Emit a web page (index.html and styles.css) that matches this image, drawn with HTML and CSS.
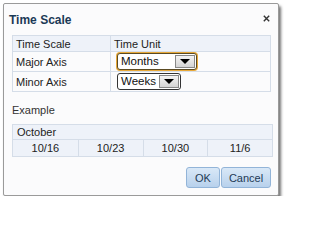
FILE: index.html
```html
<!DOCTYPE html>
<html>
<head>
<meta charset="utf-8">
<link rel="stylesheet" href="styles.css">
</head>
<body>
<div class="dialog">
  <div class="titlebar">
    <span class="title">Time Scale</span>
    <svg class="close" width="7" height="7" viewBox="0 0 7 7"><path d="M0.8 0.8 L6.2 6.2 M6.2 0.8 L0.8 6.2" stroke="#333" stroke-width="1.4" fill="none"/></svg>
  </div>
  <div class="content">
    <table class="grid">
      <tr class="head"><td class="c1">Time Scale</td><td>Time Unit</td></tr>
      <tr><td class="c1">Major Axis</td><td><div class="sel focus sel-m"><span class="val">Months</span><span class="btn"><span class="tri"></span></span></div></td></tr>
      <tr><td class="c1">Minor Axis</td><td><div class="sel sel-w"><span class="val">Weeks</span><span class="btn"><span class="tri"></span></span></div></td></tr>
    </table>
    <div class="label">Example</div>
    <div class="example">
      <div class="month">October</div>
      <div class="weeks">
        <div class="wk">10/16</div>
        <div class="wk">10/23</div>
        <div class="wk">10/30</div>
        <div class="wk">11/6</div>
      </div>
    </div>
    <div class="actions">
      <button class="b b-ok">OK</button>
      <button class="b b-cancel">Cancel</button>
    </div>
  </div>
</div>
</body>
</html>
```
FILE: styles.css
```css
html, body { margin: 0; padding: 0; background: #ffffff; }
body { padding: 3px 0 0 3px; font-family: "Liberation Sans", Arial, sans-serif; font-size: 11px; color: #333; }
.dialog {
  width: 274px; height: 191px;
  border: 1px solid #9a9a9a;
  border-radius: 2px;
  background: #fbfbfc;
  box-shadow: 2px 3px 3px rgba(0,0,0,0.55);
  display: flex; flex-direction: column;
}
.titlebar { height: 30px; display: flex; align-items: center; justify-content: space-between; padding: 0 8px 0 5px; }
.title { font-weight: bold; font-size: 12px; color: #1b3956; margin-top: 2px; }
.close { margin-top: -1px; }
.content { padding: 1px 7px 0 8px; display: flex; flex-direction: column; }
.grid { border-collapse: collapse; width: 259px; }
.grid td { border: 1px solid #d5dde8; padding: 0 0 0 3px; height: 19px; color: #222; }
.grid .head td { background: #eef2f9; height: 15px; }
.grid td.c1 { width: 94px; }
.sel { display: flex; align-items: stretch; border: 1px solid #333; border-radius: 3px; background: #fff; height: 15px; box-sizing: border-box; margin-left: 3px; }
.sel-m { width: 80px; height: 17px; border-color: #5a4a22; box-shadow: 0 0 0 1px #e8a93a; }
.sel-w { width: 64px; height: 17px; }
.sel .val { flex: 1; padding-left: 3px; line-height: 15px; font-size: 11.5px; color: #111; }
.sel .btn { width: 18px; margin: 1px; border: 1px solid #888; background: linear-gradient(#f4f4f4, #d4d4d4); display: flex; align-items: center; justify-content: center; }
.tri { width: 0; height: 0; border-left: 5px solid transparent; border-right: 5px solid transparent; border-top: 5px solid #000; }
.label { margin-top: 12px; height: 20px; color: #333; }
.example { width: 259px; border: 1px solid #d5dde8; background: #eef2f9; }
.month { height: 14px; line-height: 15px; padding-left: 4px; border-bottom: 1px solid #d5dde8; color: #222; }
.weeks { display: grid; grid-template-columns: repeat(4, 1fr); }
.wk { height: 16px; line-height: 16px; text-align: center; border-left: 1px solid #d5dde8; color: #222; }
.wk:first-child { border-left: none; }
.actions { display: flex; justify-content: flex-end; gap: 1px; margin-top: 10px; padding-right: 0; }
.b { font-family: "Liberation Sans", Arial, sans-serif; font-size: 11px; color: #1e3a55; height: 21px; border: 1px solid #92b4d8; border-radius: 3px; background: linear-gradient(#d9e8f7, #b8d1ec); padding: 0; }
.b-ok { width: 34px; }
.b-cancel { width: 50px; }
```
